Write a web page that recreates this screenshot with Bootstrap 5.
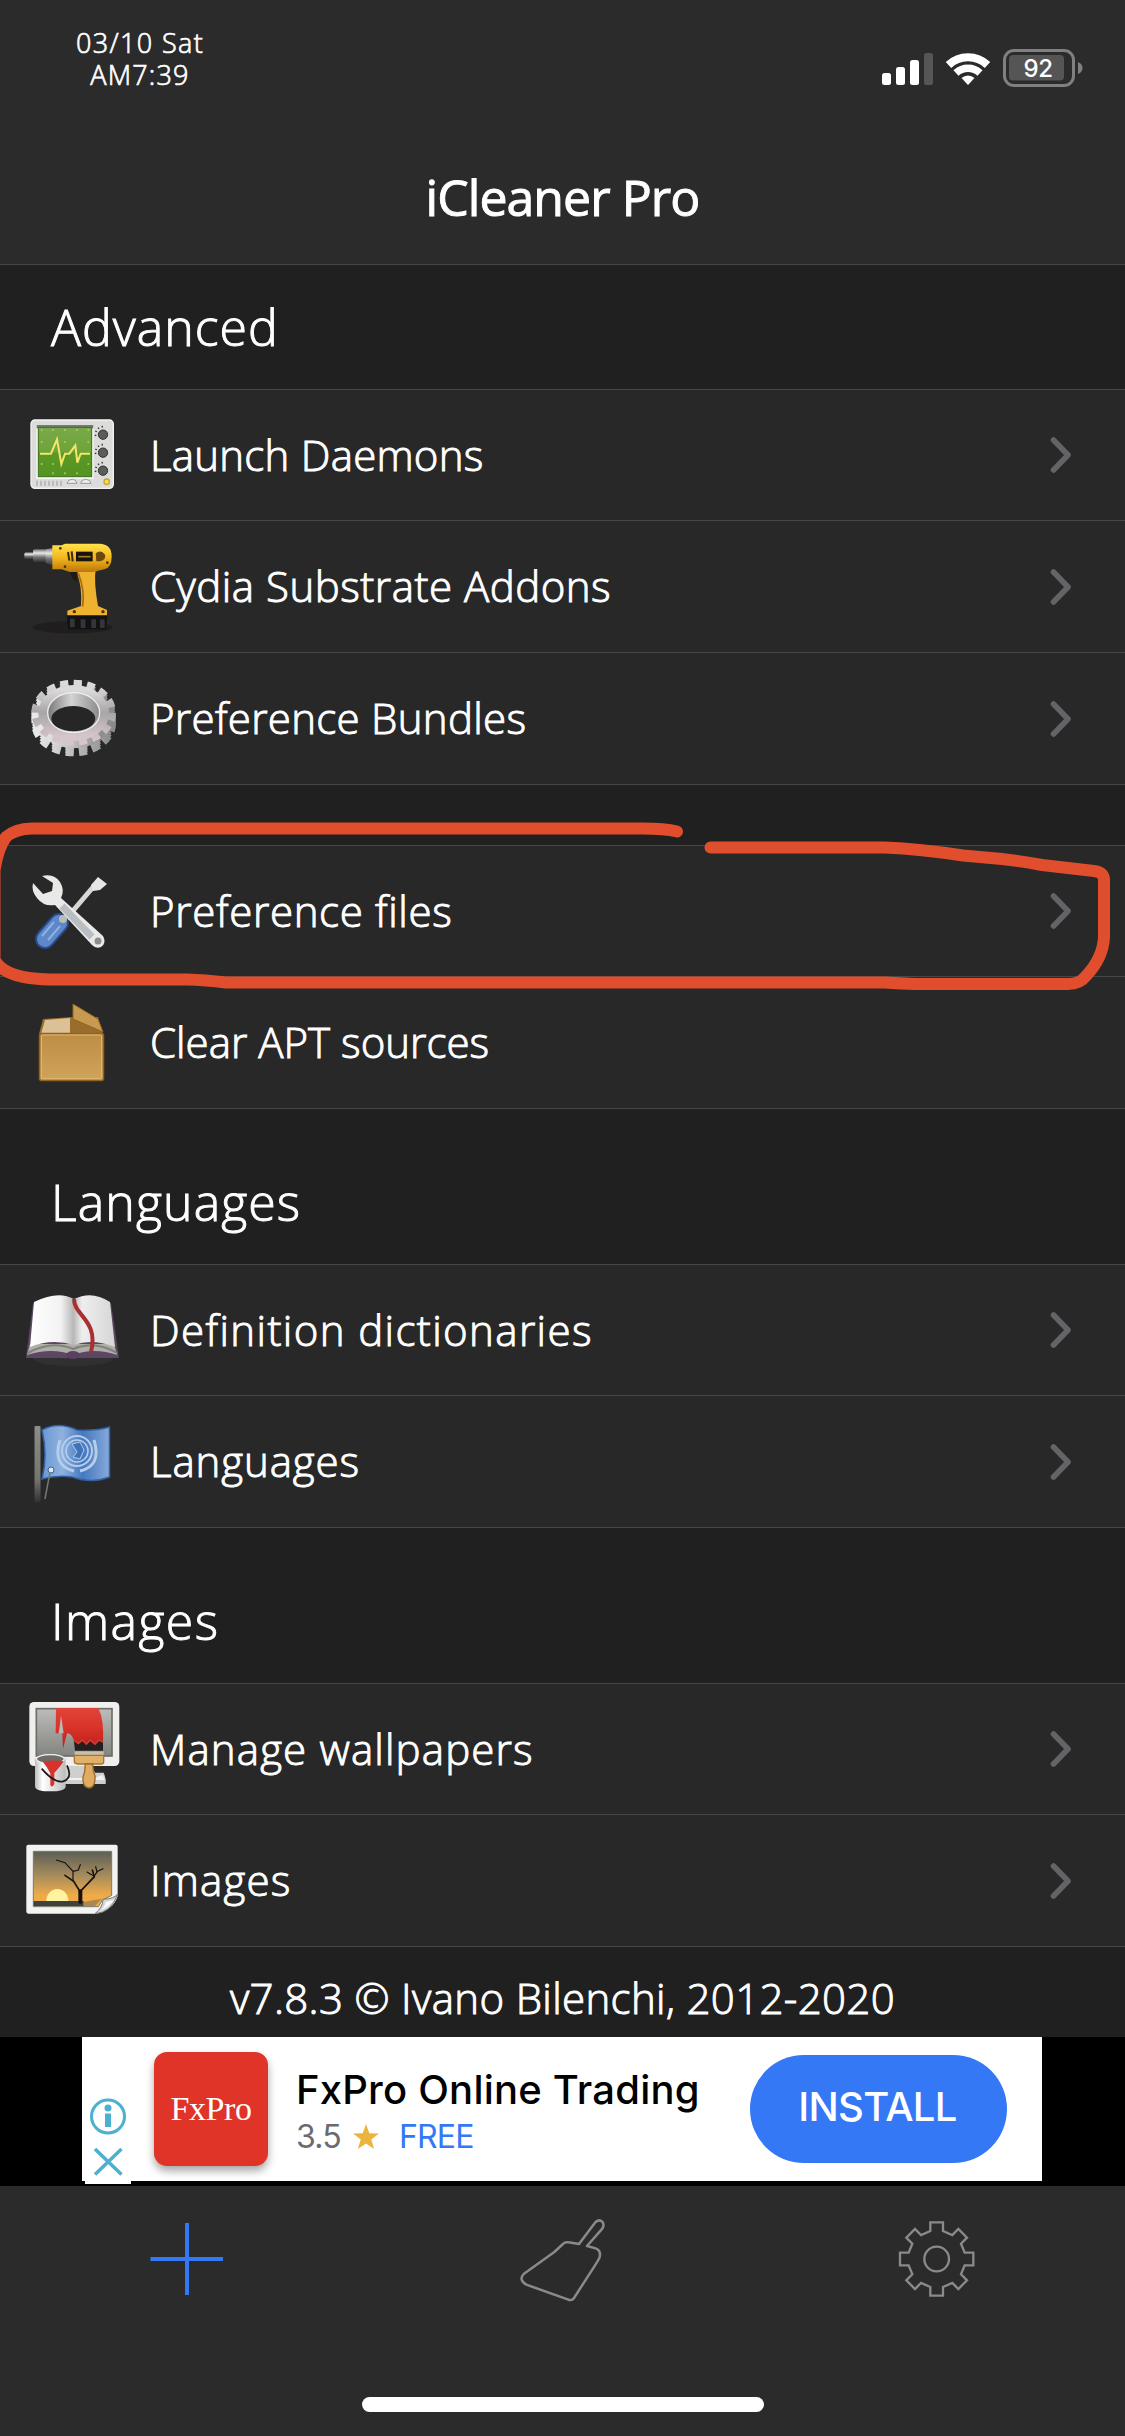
<!DOCTYPE html>
<html lang="en">
<head>
<meta charset="utf-8">
<title>iCleaner Pro</title>
<meta name="viewport" content="width=device-width, initial-scale=1">
<link href="https://cdn.jsdelivr.net/npm/bootstrap@5.3.0/dist/css/bootstrap.min.css" rel="stylesheet">
<style>
body{background:#202020;color:#fff;font-family:"Open Sans","Noto Sans",sans-serif;font-weight:300;margin:0}
.phone{width:1125px;height:2436px;overflow:hidden;background:#202020;-webkit-text-stroke:.95px currentColor}
.topbar{height:265px;background:#2b2b2b;border-bottom:1px solid #454545}
.statusbar{height:134px}
.clock{width:160px;margin:27px 0 0 60px;font-size:27px;line-height:32px;-webkit-text-stroke-width:.7px}
.clock .day{letter-spacing:1.35px}
.clock .hour{letter-spacing:1.2px}
.signals{margin:42px 36px 0 0}
.apptitle{font-size:50px;line-height:126px;letter-spacing:-.95px;font-weight:400}
.sect{height:155px;padding:31px 0 0 51px;font-size:50px;line-height:124px;font-weight:300;margin:0}
.sect.first{height:124px;padding-top:0}
.gap60{height:60px}
.rows{--bs-list-group-bg:#282828;--bs-list-group-border-color:#464646;--bs-list-group-color:#fff;border-radius:0}
.rows .list-group-item{height:132px;padding:0 51px 0 15px;font-size:42px;border-width:0 0 1px}
.rows .list-group-item:first-child{border-top-width:1px}
.rows .list-group-item span{margin-bottom:2px}
.rows .pic{width:115px;flex:none;margin-right:20px}
.rows .tall130{height:130px}.rows .tall131{height:131px}
.chev{width:26px;height:42px}
.version{height:90px;font-size:42px;line-height:101px;letter-spacing:.35px}
.adstrip{height:149px;background:#000;padding-left:82px}
.ad{width:960px;height:144px;font-family:Inter,sans-serif;color:#000;-webkit-text-stroke:0}
.adopts{left:3px;top:59px;width:46px;height:88px;background:#fff}
.adlogo{width:114px;height:114px;margin-left:72px;border-radius:13px;background:#df3427;color:#fff;font:400 34px/114px "Liberation Serif",serif;box-shadow:0 5px 9px rgba(0,0,0,.35);letter-spacing:-.4px}
.adtext{margin-left:28px;margin-top:4px}
.adtitle{font-size:40px;line-height:51px;font-weight:500;letter-spacing:.2px}
.adsub{font-size:32px;line-height:44px;font-weight:400;letter-spacing:-.8px}
.install{width:257px;height:108px;border-radius:54px;background:#3478f6;color:#fff;font-size:40px;font-weight:500;line-height:103px;letter-spacing:-.7px;margin-right:35px;padding-right:2px}
.tabs{height:250px;background:#2b2b2b}
.tabs svg{width:90px;height:90px}
.tabrow{padding-top:29px}
.homebar{width:402px;height:15px;border-radius:8px;background:#fff;margin-bottom:24px}
</style>
<script src="https://cdn.jsdelivr.net/npm/bootstrap@5.3.0/dist/js/bootstrap.bundle.min.js"></script>
</head>
<body>
<svg width="0" height="0" class="position-absolute">
<defs>
<symbol id="chev" viewBox="0 0 26 42"><path d="M5.500 6 L20 21 L5.500 36" fill="none" stroke="#636368" stroke-width="5.600" stroke-linecap="round" stroke-linejoin="round"/></symbol>
<linearGradient id="gScreen" x1="0" y1="0" x2="0" y2="1"><stop offset="0" stop-color="#79a94a"/><stop offset=".5" stop-color="#6ea33a"/><stop offset=".52" stop-color="#5b9826"/><stop offset="1" stop-color="#559422"/></linearGradient>
<linearGradient id="gDrill" x1="0" y1="0" x2="0" y2="1"><stop offset="0" stop-color="#ffe34a"/><stop offset=".5" stop-color="#f3b71c"/><stop offset="1" stop-color="#b9780c"/></linearGradient>
<linearGradient id="gMetal" x1="0" y1="0" x2="0" y2="1"><stop offset="0" stop-color="#777"/><stop offset=".3" stop-color="#e8e8e8"/><stop offset=".6" stop-color="#777"/><stop offset="1" stop-color="#333"/></linearGradient>
<linearGradient id="gFace" x1="0" y1="0" x2="0" y2="1"><stop offset="0" stop-color="#dcdadb"/><stop offset=".5" stop-color="#a9a5a6"/><stop offset="1" stop-color="#d6c6cb"/></linearGradient>
<linearGradient id="gSide" x1="0" y1="0" x2="1" y2="0"><stop offset="0" stop-color="#e8e8e8"/><stop offset=".5" stop-color="#bdbdbd"/><stop offset="1" stop-color="#8b8b8b"/></linearGradient>
<linearGradient id="gBore" x1="0" y1="0" x2="1" y2="0"><stop offset="0" stop-color="#777"/><stop offset=".45" stop-color="#d4d4d4"/><stop offset="1" stop-color="#8a8a8a"/></linearGradient>
<linearGradient id="gBox" x1="0" y1="0" x2="0" y2="1"><stop offset="0" stop-color="#bd8d44"/><stop offset="1" stop-color="#d0a35b"/></linearGradient>
<linearGradient id="gPage" x1="0" y1="0" x2="1" y2="0"><stop offset="0" stop-color="#fff"/><stop offset=".7" stop-color="#f2f2f2"/><stop offset="1" stop-color="#b5b5b5"/></linearGradient>
<linearGradient id="gPage2" x1="0" y1="0" x2="1" y2="0"><stop offset="0" stop-color="#bbb"/><stop offset=".2" stop-color="#eee"/><stop offset="1" stop-color="#d6d6d6"/></linearGradient>
<linearGradient id="gFlag" x1="0" y1="0" x2="1" y2="0"><stop offset="0" stop-color="#6a98d3"/><stop offset=".3" stop-color="#8fb2df"/><stop offset=".6" stop-color="#4478bf"/><stop offset="1" stop-color="#86a9da"/></linearGradient>
<linearGradient id="gPole" x1="0" y1="0" x2="0" y2="1"><stop offset="0" stop-color="#8d8d89"/><stop offset=".7" stop-color="#74746f"/><stop offset="1" stop-color="#333"/></linearGradient>
<linearGradient id="gMon" x1="0" y1="0" x2="0" y2="1"><stop offset="0" stop-color="#bcbdba"/><stop offset="1" stop-color="#82847f"/></linearGradient>
<linearGradient id="gSky" x1="0" y1="0" x2="0" y2="1"><stop offset="0" stop-color="#5d5e56"/><stop offset=".45" stop-color="#a88d5c"/><stop offset=".8" stop-color="#f0ab48"/><stop offset="1" stop-color="#f4a93c"/></linearGradient>
<linearGradient id="gCan" x1="0" y1="0" x2="1" y2="0"><stop offset="0" stop-color="#bbb"/><stop offset=".25" stop-color="#fff"/><stop offset="1" stop-color="#bcbcbc"/></linearGradient>
<linearGradient id="gRed" x1="0" y1="0" x2="0" y2="1"><stop offset="0" stop-color="#e0443a"/><stop offset=".5" stop-color="#d93229"/><stop offset="1" stop-color="#b52019"/></linearGradient>
</defs>
</svg>

<div class="phone position-relative">
  <header class="topbar">
    <div class="statusbar d-flex justify-content-between align-items-start">
      <div class="clock text-center text-nowrap"><div class="day">03/10 Sat</div><div class="hour">AM7:39</div></div>
      <svg class="signals" width="210" height="50" viewBox="879 42 210 50">
        <rect x="882" y="73" width="9" height="12" rx="2.500" fill="#fff"/><rect x="896" y="67" width="9" height="18" rx="2.500" fill="#fff"/><rect x="910" y="60" width="9" height="25" rx="2.500" fill="#fff"/><rect x="924" y="53" width="9" height="32" rx="2.500" fill="#565656"/>
        <g fill="none" stroke="#fff"><path d="M948.500 65 A28.500 28.500 0 0 1 987.500 65" stroke-width="8"/><path d="M956 73 A17.500 17.500 0 0 1 980 73" stroke-width="7.500"/></g>
        <path d="M968 85 L961.500 78 A9.500 9.500 0 0 1 974.500 78 Z" fill="#fff"/>
        <rect x="1004.500" y="50.500" width="69" height="35" rx="9.500" fill="none" stroke="#808080" stroke-width="3"/>
        <rect x="1009" y="55" width="55" height="25.500" rx="4" fill="#555"/>
        <path d="M1078 62 Q1082.500 64 1082.500 68 Q1082.500 72 1078 74 Z" fill="#808080"/>
        <text x="1038" y="76.500" text-anchor="middle" font-family="Inter" font-weight="500" font-size="24" letter-spacing="-.5" fill="#fff" style="-webkit-text-stroke:0">92</text>
      </svg>
    </div>
    <div class="apptitle text-center">iCleaner Pro</div>
  </header>

  <h2 class="sect first" style="letter-spacing:1px">Advanced</h2>
  <div class="list-group rows">
    <div class="list-group-item d-flex align-items-center">
      <svg class="pic tall130" viewBox="0 -30 345 390">
        <rect x="48" y="60" width="247" height="205" rx="12" fill="#dcdcda" stroke="#f3f3f3" stroke-width="4"/>
        <rect x="64" y="75" width="172" height="162" fill="#f5f5f3"/><rect x="65" y="75" width="170" height="10" fill="#777b73"/><rect x="70" y="82" width="160" height="148" fill="url(#gScreen)" stroke="#3c6e18" stroke-width="3"/>
        <g fill="#a8cc56"><circle cx="80" cy="90" r="3"/><circle cx="114" cy="90" r="3"/><circle cx="150" cy="90" r="3"/><circle cx="186" cy="90" r="3"/><circle cx="220" cy="90" r="3"/><circle cx="80" cy="126" r="3"/><circle cx="150" cy="126" r="3"/><circle cx="220" cy="126" r="3"/><circle cx="80" cy="192" r="3"/><circle cx="114" cy="192" r="3"/><circle cx="220" cy="192" r="3"/><circle cx="114" cy="220" r="3"/><circle cx="150" cy="220" r="3"/><circle cx="186" cy="220" r="3"/></g>
        <path d="M75 161 H108 L126 118 L139 192 L150 161 H163 L181 136 L187 188 L197 161 H225" fill="none" stroke="#f4e66a" stroke-width="6"/>
        <g fill="#5a5d5a" stroke="#333" stroke-width="3"><circle cx="264" cy="104" r="14"/><circle cx="264" cy="158" r="14"/><circle cx="264" cy="212" r="14"/></g>
        <g fill="none" stroke="#333" stroke-width="5" stroke-dasharray="4 8"><path d="M242 108 A23 23 0 0 1 264 80"/><path d="M242 162 A23 23 0 0 1 264 134"/><path d="M242 216 A23 23 0 0 1 264 188"/></g>
        <path d="M66 242V258M78 242V258M90 242V258M102 242V258M114 242V258M126 242V258M138 242V258" stroke="#aaa" stroke-width="4"/>
        <path d="M156 250 Q158 238 172 238 Q184 238 186 250ZM197 250 Q199 238 212 238 Q226 238 228 250Z" fill="#eee" stroke="#999" stroke-width="3"/>
        <circle cx="275" cy="245" r="8" fill="#ece06a" stroke="#c5ab1c" stroke-width="4"/>
      </svg>
      <span style="letter-spacing:.25px">Launch Daemons</span><svg class="chev ms-auto"><use href="#chev"/></svg>
    </div>
    <div class="list-group-item d-flex align-items-center">
      <svg class="pic tall131" viewBox="0 363 345 393">
        <ellipse cx="172" cy="682" rx="120" ry="18" fill="#1f1d1d"/>
        <rect x="28" y="457" width="28" height="20" rx="5" fill="url(#gMetal)"/><rect x="54" y="448" width="40" height="38" rx="5" fill="url(#gMetal)"/><path d="M92 448 L114 444 V497 L92 488Z" fill="url(#gMetal)"/>
        <path d="M186 508 H242 Q236 545 249 618 L276 630 V648 H157 V632 L198 618 Q202 560 186 520Z" fill="#efb22f"/>
        <path d="M190 520 Q210 570 203 620" fill="none" stroke="#a86d10" stroke-width="5"/>
        <path d="M164 508 Q168 536 184 545 L188 516Z" fill="#1e1a14"/>
        <path d="M112 436 H140 L150 431 H256 Q291 434 290 470 Q290 503 268 508 L234 516 H164 L140 508 H112Z" fill="url(#gDrill)"/>
        <rect x="183" y="455" width="50" height="29" fill="#19150c"/><path d="M190 470 H227" stroke="#a27b25" stroke-width="5"/>
        <path d="M159 456 L163 482M170 454 L173 484" stroke="#3f2a08" stroke-width="6"/><path d="M242 460 Q258 448 270 464 Q274 478 256 484 H244Z" fill="#6b4709"/>
        <circle cx="136" cy="445" r="4" fill="#4b3306"/><circle cx="150" cy="500" r="4" fill="#4b3306"/><circle cx="277" cy="488" r="4" fill="#4b3306"/><circle cx="178" cy="635" r="5" fill="#4b3306"/><circle cx="264" cy="635" r="5" fill="#4b3306"/>
        <path d="M155 646 H277 L273 688 H160Z" fill="#121214"/><path d="M172 656V682M204 658V684M236 658V684M262 658V684" stroke="#36363a" stroke-width="14"/>
      </svg>
      <span style="letter-spacing:.5px">Cydia Substrate Addons</span><svg class="chev ms-auto"><use href="#chev"/></svg>
    </div>
    <div class="list-group-item d-flex align-items-center">
      <svg class="pic tall131" viewBox="0 759 345 393">
        <g fill="none" stroke="url(#gSide)">
          <g stroke-width="26" stroke-dasharray="24 16.500"><ellipse cx="176" cy="970" rx="114" ry="86" pathLength="648"/><ellipse cx="176" cy="962" rx="114" ry="86" pathLength="648"/><ellipse cx="176" cy="954" rx="114" ry="86" pathLength="648"/><ellipse cx="176" cy="946" rx="114" ry="86" pathLength="648"/></g>
          <ellipse cx="176" cy="962" rx="92" ry="66" stroke-width="34"/>
        </g>
        <g fill="none" stroke="url(#gFace)"><ellipse cx="176" cy="938" rx="114" ry="86" stroke-width="26" pathLength="648" stroke-dasharray="24 16.500"/><ellipse cx="176" cy="939" rx="92" ry="70" stroke-width="28"/></g>
        <ellipse cx="176" cy="938" rx="78" ry="60" fill="url(#gBore)" stroke="#eee" stroke-width="4"/>
        <ellipse cx="175" cy="956" rx="66" ry="38" fill="#262626"/>
      </svg>
      <span style="letter-spacing:.3px">Preference Bundles</span><svg class="chev ms-auto"><use href="#chev"/></svg>
    </div>
  </div>

  <div class="gap60"></div>
  <div class="list-group rows">
    <div class="list-group-item d-flex align-items-center">
      <svg class="pic tall130" viewBox="15 846 115 130">
        <path d="M66 919 L94 886" stroke="#d7d7d5" stroke-width="5"/><path d="M91 885 L98 877 L107 884 L100 890 L93 891Z" fill="#e6e6e4"/>
        <path d="M59 923 L45 939" stroke="#274c8d" stroke-width="20" stroke-linecap="round"/><path d="M59 923 L45 939" stroke="#5c87c8" stroke-width="16" stroke-linecap="round"/><path d="M60 926 L48 940M54 922 L42 936" stroke="#8fb0e0" stroke-width="2"/><circle cx="63" cy="919" r="4" fill="#bbb"/>
        <path d="M42 876 Q54 873 60 882 Q65 890 61 898 L103 936 Q107 943 101 947 Q96 949 92 945 L55 905 Q44 907 37 898 Q31 891 33 883 L43 894 L52 891 L53 883Z" fill="#e9e9e7"/><path d="M62 906 L92 937" stroke="#b8bec2" stroke-width="7"/><circle cx="98" cy="941" r="3.500" fill="#8d8d8b"/>
      </svg>
      <span style="letter-spacing:.65px">Preference files</span><svg class="chev ms-auto"><use href="#chev"/></svg>
    </div>
    <div class="list-group-item d-flex align-items-center">
      <svg class="pic tall131" viewBox="15 977 115 131">
        <path d="M39 1034 L43 1019 L72 1017 H98 L103 1034Z" fill="#9b6d2c"/><path d="M41 1034 L45 1020 L70 1018 V1034Z" fill="#dcc096"/>
        <path d="M73 1004 L98 1019 L103 1032 L73 1019Z" fill="#c79a52" stroke="#93641d"/>
        <rect x="39.500" y="1033.500" width="64" height="47" rx="2" fill="url(#gBox)" stroke="#8f621e" stroke-width="1.500"/><rect x="41.500" y="1035" width="60" height="43.500" rx="1" fill="none" stroke="#dcb577"/>
      </svg>
      <span style="letter-spacing:.02px">Clear APT sources</span>
    </div>
  </div>

  <h2 class="sect" style="letter-spacing:1.1px">Languages</h2>
  <div class="list-group rows">
    <div class="list-group-item d-flex align-items-center">
      <svg class="pic tall130" viewBox="15 1265 115 130">
        <ellipse cx="73" cy="1359" rx="40" ry="7" fill="#303030"/>
        <path d="M33 1303 L26 1358 H119 L111 1303Z" fill="#5d4664"/>
        <path d="M30 1344 L27 1355 Q52 1347 73 1355 Q94 1347 117 1355 L114 1344Z" fill="#aeb0a8"/>
        <path d="M34 1302 Q58 1290 74 1299 V1345 Q52 1338 30 1347Z" fill="url(#gPage)"/><path d="M74 1299 Q92 1290 110 1302 L115 1347 Q92 1338 74 1345Z" fill="url(#gPage2)"/>
        <path d="M28 1353 Q52 1340 73 1349 Q95 1340 117 1353" fill="none" stroke="#81837c" stroke-width="2"/><ellipse cx="73" cy="1355" rx="7" ry="4" fill="#5b3f63"/>
        <path d="M74 1299 C74 1316 99 1320 91 1352" fill="none" stroke="#a83030" stroke-width="4"/>
      </svg>
      <span style="letter-spacing:1.38px">Definition dictionaries</span><svg class="chev ms-auto"><use href="#chev"/></svg>
    </div>
    <div class="list-group-item d-flex align-items-center">
      <svg class="pic tall131" viewBox="15 1396 115 131">
        <rect x="34.500" y="1426" width="6" height="76" rx="1" fill="url(#gPole)"/>
        <path d="M42 1430 Q58 1421 77 1430 Q95 1431 109.500 1427 V1477 Q92 1484 72 1477 Q57 1475 42 1479Q48 1455 42 1430Z" fill="url(#gFlag)" stroke="#345f9e" stroke-width="1.500"/>
        <g fill="none" stroke="#b6cdea" stroke-width="2"><circle cx="77" cy="1451" r="15"/><circle cx="77" cy="1451" r="11" stroke-width="1.500"/><path d="M60 1440 Q52 1466 74 1471M94 1440 Q102 1466 80 1471" stroke-width="3"/></g>
        <path d="M72 1444 L80 1442 L84 1450 L80 1459 L73 1457 L77 1452Z" fill="#3f73b9" stroke="#b6cdea"/>
        <circle cx="51" cy="1470" r="3" fill="#dfe8f4" stroke="#345f9e"/><path d="M50 1472 L45 1499" stroke="#777" stroke-width="1.500"/>
      </svg>
      <span style="letter-spacing:.9px">Languages</span><svg class="chev ms-auto"><use href="#chev"/></svg>
    </div>
  </div>

  <h2 class="sect" style="letter-spacing:1.4px">Images</h2>
  <div class="list-group rows">
    <div class="list-group-item d-flex align-items-center">
      <svg class="pic tall130" viewBox="0 -18 345 390">
        <path d="M150 228 H232 L240 248 H266 Q274 266 272 282 H150Z" fill="#cfcfcd"/><path d="M155 264 H240 L262 254 L270 270 H155Z" fill="#f1f1ef"/>
        <rect x="43" y="36" width="270" height="192" rx="14" fill="#efefed"/><rect x="64" y="56" width="227" height="142" fill="url(#gMon)" stroke="#6d6f6a" stroke-width="5"/>
        <path d="M123 54 H250 Q268 90 264 160 L250 150 L240 162 L226 150 L214 162 L202 150 L190 158 L176 148 Q166 126 156 130 L144 176 L140 90 L130 130 H122Z" fill="url(#gRed)"/><path d="M132 128 L138 76 L146 130Z" fill="#b9bab7"/>
        <path d="M176 148 L190 158 L202 150 L214 162 L226 150 L240 162 L250 150 L264 156 V182 H180Z" fill="#241f1e"/><path d="M176 150 L190 160 L202 150 L214 162 L226 150 L240 162 L252 150 L264 156" fill="none" stroke="#d73a30" stroke-width="5"/>
        <rect x="179" y="184" width="87" height="12" fill="#c8c0ac"/><path d="M178 196 H266 V216 Q266 222 258 222 H188 Q178 222 178 214Z" fill="#dfb16b" stroke="#a77432" stroke-width="4"/>
        <path d="M210 222 H234 Q232 238 240 258 Q242 292 222 294 Q202 292 204 262 Q212 240 210 222Z" fill="#dfac62" stroke="#9e6a24" stroke-width="4"/>
        <path d="M60 206 Q106 178 152 206 V290 Q150 304 106 304 Q62 304 60 290Z" fill="url(#gCan)"/><ellipse cx="106" cy="207" rx="42" ry="13" fill="#6d6a68" stroke="#eee" stroke-width="4"/>
        <path d="M84 216 Q110 208 146 214 Q130 238 118 248 V282 Q110 296 106 284 V250 Q96 230 84 216Z" fill="#d8322a"/>
        <path d="M80 236 Q118 280 144 274 Q174 266 156 226" fill="none" stroke="#171717" stroke-width="5"/>
      </svg>
      <span style="letter-spacing:1.15px">Manage wallpapers</span><svg class="chev ms-auto"><use href="#chev"/></svg>
    </div>
    <div class="list-group-item d-flex align-items-center">
      <svg class="pic tall131" viewBox="0 375 345 393">
        <path d="M40 464 H302 Q308 464 308 470 V618 Q296 660 242 671 H40 Q34 671 34 664 V470 Q34 464 40 464Z" fill="#f3f3f1"/>
        <path d="M55 484 H290 V616 L262 630 L250 650 H55Z" fill="url(#gSky)" stroke="#777a72" stroke-width="3"/>
        <path d="M94 633 A33 36 0 0 1 160 633Z" fill="#fff3a0"/><rect x="56" y="633" width="150" height="15" fill="#3b4240"/>
        <g fill="none" stroke="#17120f" stroke-linecap="round"><path d="M196 636 V604" stroke-width="12"/><path d="M196 606 L176 574 L150 556M196 604 L238 560 L232 540" stroke-width="5"/><path d="M174 572 V544 L150 518 L124 510M174 544 L190 540 L196 524M232 556 L216 546M236 560 L248 544 L264 536M246 546 L242 530" stroke-width="3.500"/></g>
        <path d="M206 636 L260 626 L240 648 H206Z" fill="#ab8850"/>
        <path d="M308 612 Q300 626 264 628 Q264 652 240 671 Q290 668 308 612Z" fill="#d6d6d2" stroke="#777" stroke-width="3"/><path d="M272 636 Q270 650 258 660 Q284 650 296 630Z" fill="#fafafa"/>
      </svg>
      <span style="letter-spacing:1.2px">Images</span><svg class="chev ms-auto"><use href="#chev"/></svg>
    </div>
  </div>

  <div class="version text-center text-nowrap">v7.8.3 © Ivano Bilenchi, 2012-2020</div>

  <div class="adstrip">
    <div class="ad bg-white d-flex align-items-center position-relative">
      <div class="adopts position-absolute">
        <svg class="d-block" width="46" height="88" viewBox="85 2096 46 88"><g fill="none" stroke="#4cb0cf" stroke-width="3"><circle cx="108" cy="2116.500" r="16.500"/><path d="M95 2149 L121.500 2174.500M121.500 2149 L95 2174.500" stroke-width="3.500"/></g><circle cx="108" cy="2108" r="3.500" fill="#4cb0cf"/><rect x="105" y="2113.500" width="6" height="13.500" fill="#4cb0cf"/></svg>
      </div>
      <div class="adlogo text-center">FxPro</div>
      <div class="adtext text-nowrap">
        <div class="adtitle">FxPro Online Trading</div>
        <div class="adsub d-flex align-items-center"><span style="color:#6a6b70">3.5</span>
          <svg width="28" height="28" viewBox="0 0 28 28" style="margin-left:11px"><path d="M14 1 L17.300 10.200 L27 10.500 L19.300 16.400 L22.100 26 L14 20.400 L5.900 26 L8.700 16.400 L1 10.500 L10.700 10.200Z" fill="#ebb43c"/></svg>
          <span style="color:#3478f6;margin-left:19px">FREE</span></div>
      </div>
      <div class="install text-center ms-auto">INSTALL</div>
    </div>
  </div>

  <nav class="tabs d-flex flex-column justify-content-between align-items-center">
    <div class="tabrow row g-0 w-100 text-center">
      <div class="col-4"><svg viewBox="143.500 2215 90 90"><path d="M151 2259 H223.500M187.500 2223 V2295" stroke="#3478f6" stroke-width="4"/></svg></div>
      <div class="col-4"><svg viewBox="55 45 270 270"><path d="M238 132 L286 68 Q297 56 308 65 Q316 76 306 88 L262 138 L288 145 Q306 152 299 174 Q294 184 286 196 L223 294 Q216 304 204 298 L80 254 Q56 240 72 222 L164 156 L190 132 Q196 125 206 127Z" fill="none" stroke="#8a8a8a" stroke-width="7.500" stroke-linejoin="round"/></svg></div>
      <div class="col-4"><svg viewBox="1180 45 270 270"><path d="M1292 67 H1330 V93 L1358 105 L1376 87 L1402 113 L1384 131 L1395 158 H1421 V196 H1395 L1384 223 L1402 241 L1376 267 L1358 249 L1330 261 V287 H1292 V261 L1264 249 L1246 267 L1220 241 L1238 223 L1227 196 H1201 V158 H1227 L1238 131 L1220 113 L1246 87 L1264 105 L1292 93Z" fill="none" stroke="#8a8a8a" stroke-width="7"/><circle cx="1311" cy="177" r="37" fill="none" stroke="#8a8a8a" stroke-width="7"/></svg></div>
    </div>
    <div class="homebar"></div>
  </nav>

  <!-- hand-drawn marker around "Preference files" -->
  <svg class="position-absolute top-0 start-0 pe-none" width="1125" height="2436" viewBox="0 0 1125 2436">
    <path d="M677 831.500 Q665 828.500 642 828.500 H32 Q15 829 6 837 Q-2 848 -5.500 870 V960 Q5 979 50 979.500 H187 Q205 980 226 982.500 H885 Q900 983.500 915 984 H1068 Q1080 984 1086 976 Q1103 958 1104 937 V880 Q1104 872 1094 871 L1042 865 Q1020 861 1002 859 L963 855.500 Q920 849 885 847.500 H710.500" fill="none" stroke="#e04e2d" stroke-width="12" stroke-linecap="round" stroke-linejoin="round"/>
  </svg>
</div>
</body>
</html>
